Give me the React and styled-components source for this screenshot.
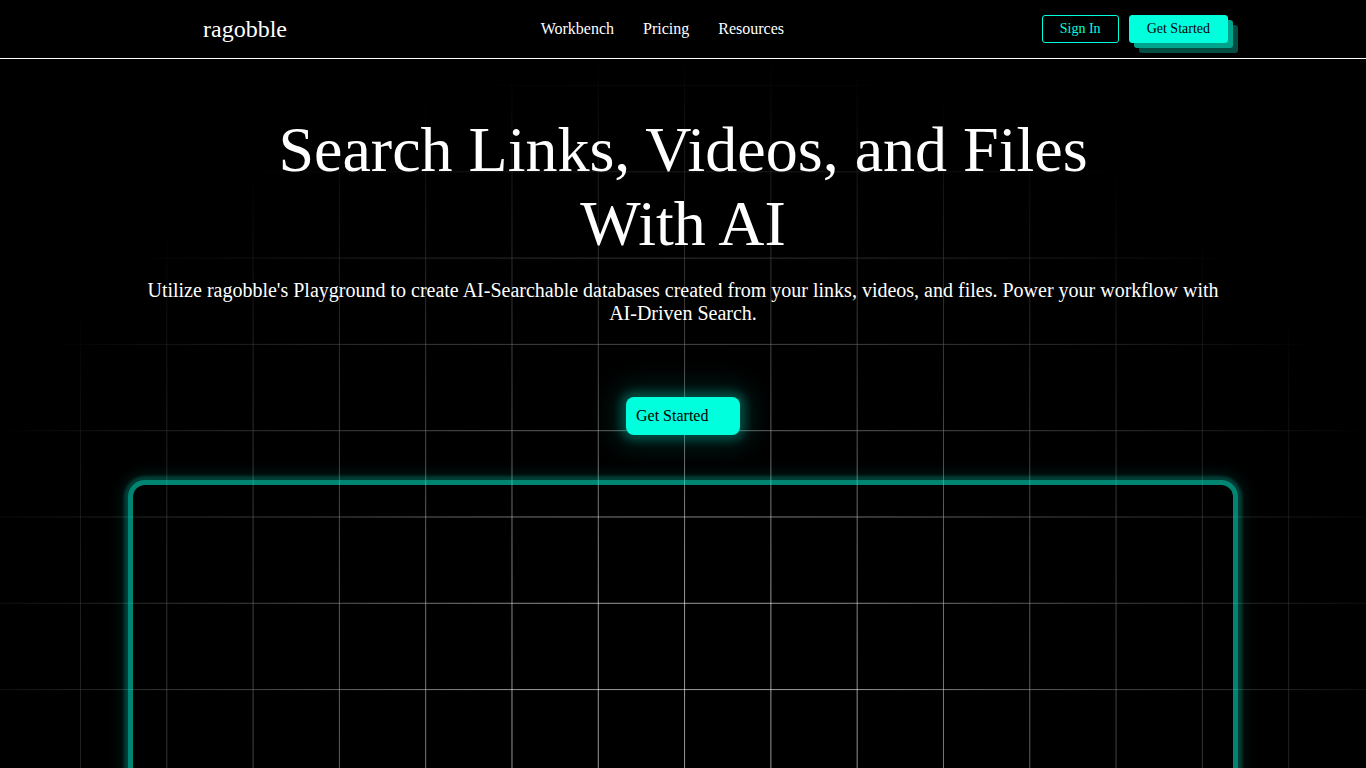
import React from 'react';
import styled, { createGlobalStyle } from 'styled-components';

const GlobalStyle = createGlobalStyle`
  * { box-sizing: border-box; }
  html, body {
    margin: 0;
    padding: 0;
    background: #000;
  }
  body {
    font-family: "Liberation Serif", "Times New Roman", serif;
    color: #fff;
  }
`

const TEAL = '#00ffdd';

const Page = styled.div`
  position: relative;
  min-height: 100vh;
  height: 768px;
  overflow: hidden;
  background-color: #000;

  &::before {
    content: "";
    position: absolute;
    inset: 0;
    background-image:
      linear-gradient(to right, rgba(255, 255, 255, 0.6) 1px, transparent 1px),
      linear-gradient(to bottom, rgba(255, 255, 255, 0.6) 1px, transparent 1px);
    background-size: 86.3px 86.3px;
    background-position: 80px 85px;
    -webkit-mask-image: radial-gradient(ellipse 780px 680px at 50% 720px, #000 20%, rgba(0,0,0,0.45) 55%, transparent 98%);
    mask-image: radial-gradient(ellipse 780px 680px at 50% 720px, #000 20%, rgba(0,0,0,0.45) 55%, transparent 98%);
    pointer-events: none;
  }
`

const Nav = styled.nav`
  position: relative;
  z-index: 1;
  height: 59px;
  display: flex;
  align-items: center;
  justify-content: space-between;
  padding: 0 138px 0 203px;
  border-bottom: 1px solid #fff;
`

const Logo = styled.div`
  font-size: 24px;
  color: #fff;
`

const Links = styled.div`
  display: flex;
  gap: 29px;
  margin-right: 4px;
`

const NavLink = styled.a`
  font-size: 16px;
  color: #fff;
  text-decoration: none;
  cursor: pointer;
`

const Actions = styled.div`
  display: flex;
  align-items: center;
  gap: 10px;
`

const NavButton = styled.button`
  height: 28px;
  padding: 0 17px;
  font-family: inherit;
  font-size: 14px;
  border-radius: 3px;
  cursor: pointer;
  border: 1px solid ${TEAL};
  color: ${p => (p.$filled ? '#000' : TEAL)};
  background: ${p => (p.$filled ? TEAL : 'transparent')};
  box-shadow: ${p => (p.$filled ? '5px 5px 0 #00a48d, 10px 10px 0 #034d43' : 'none')};
`

const Hero = styled.main`
  position: relative;
  z-index: 1;
  display: flex;
  flex-direction: column;
  align-items: center;
  padding-top: 54px;
`

const Title = styled.h1`
  margin: 0;
  font-size: 64px;
  font-weight: 400;
  text-align: center;
  max-width: 880px;
`

const Subtitle = styled.p`
  margin: 18px 0 0;
  max-width: 1100px;
  font-size: 20px;
  text-align: center;
`

const CTA = styled.button`
  margin-top: 72px;
  width: 114px;
  height: 38px;
  padding: 0 10px;
  text-align: left;
  font-family: inherit;
  font-size: 16px;
  color: #000;
  background: ${TEAL};
  border: none;
  border-radius: 8px;
  cursor: pointer;
  box-shadow: 0 0 8px 6px rgba(0, 255, 221, 0.22), 0 0 24px 14px rgba(0, 255, 221, 0.1);
`

const Frame = styled.div`
  margin-top: 50px;
  width: 1100px;
  height: 420px;
  border-radius: 12px;
  box-shadow:
    0 0 0 5px rgba(0, 255, 221, 0.36),
    0 0 3px 9px rgba(0, 255, 221, 0.2),
    0 0 12px 14px rgba(0, 255, 221, 0.07);
`

export default function App() {
  return (
    <>
      <GlobalStyle />
      <Page>
        <Nav>
          <Logo>ragobble</Logo>
          <Links>
            <NavLink>Workbench</NavLink>
            <NavLink>Pricing</NavLink>
            <NavLink>Resources</NavLink>
          </Links>
          <Actions>
            <NavButton>Sign In</NavButton>
            <NavButton $filled>Get Started</NavButton>
          </Actions>
        </Nav>
        <Hero>
          <Title>Search Links, Videos, and Files With AI</Title>
          <Subtitle>
            Utilize ragobble's Playground to create AI-Searchable databases created from your links, videos, and files. Power your workflow with AI-Driven Search.
          </Subtitle>
          <CTA>Get Started</CTA>
          <Frame />
        </Hero>
      </Page>
    </>
  );
}
